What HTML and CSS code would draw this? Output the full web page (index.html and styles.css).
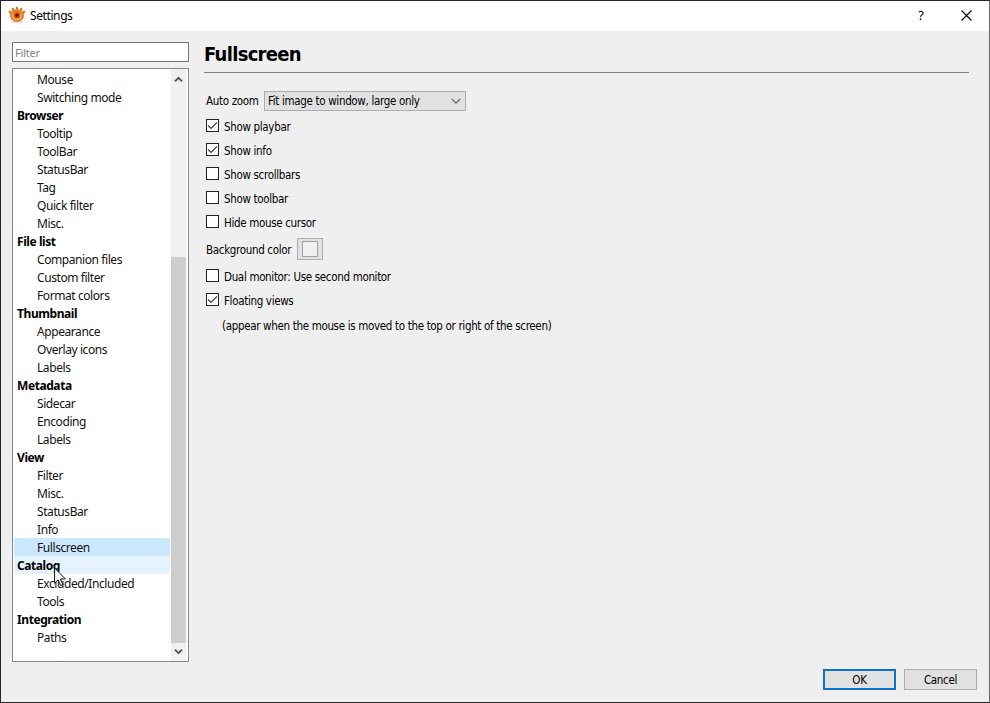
FILE: index.html
```html
<!DOCTYPE html>
<html lang="en">
<head>
<meta charset="utf-8">
<title>Settings</title>
<link rel="stylesheet" href="styles.css">
</head>
<body>
<div class="window">
  <header class="titlebar">
    <svg class="logo" width="18" height="18" viewBox="0 0 18 18">
      <ellipse cx="9" cy="15.6" rx="6" ry="1.2" fill="#d9d0cc"/>
      <g stroke="#d97920" stroke-width="2.5" stroke-linecap="round"><path d="M3.5 7.5 2 5.8M5.7 5 4.8 3M9 4V2.3M12.3 5l1-2M14.5 7.5l1.5-1.7"/></g>
      <ellipse cx="9" cy="9.8" rx="7" ry="6" fill="#e57c1b"/>
      <ellipse cx="9" cy="9.8" rx="5" ry="4" fill="#f9c078"/>
      <circle cx="9" cy="9.2" r="3.5" fill="#d9561a"/>
      <circle cx="9" cy="9.2" r="1.8" fill="#7d1205"/>
    </svg>
    <span class="caption">Settings</span>
    <span class="help">?</span>
    <svg class="close" width="11" height="11" viewBox="0 0 11 11"><path d="M.5.5l10 10M10.5.5l-10 10" stroke="#000" stroke-width="1.1"/></svg>
  </header>
  <main class="content">
    <aside class="sidebar">
      <div class="filter">Filter</div>
      <div class="list">
        <ul class="tree">
          <li>Mouse</li><li>Switching mode</li>
          <li class="group">Browser</li>
          <li>Tooltip</li><li>ToolBar</li><li>StatusBar</li><li>Tag</li><li>Quick filter</li><li>Misc.</li>
          <li class="group">File list</li>
          <li>Companion files</li><li>Custom filter</li><li>Format colors</li>
          <li class="group">Thumbnail</li>
          <li>Appearance</li><li>Overlay icons</li><li>Labels</li>
          <li class="group">Metadata</li>
          <li>Sidecar</li><li>Encoding</li><li>Labels</li>
          <li class="group">View</li>
          <li>Filter</li><li>Misc.</li><li>StatusBar</li><li>Info</li><li class="selected">Fullscreen</li>
          <li class="group hover">Catalog</li>
          <li>Excluded/Included</li><li>Tools</li>
          <li class="group">Integration</li>
          <li>Paths</li>
        </ul>
        <div class="scrollbar">
          <svg class="arrow" width="9" height="7" viewBox="0 0 9 7"><path d="M1 5.3 4.5 1.8 8 5.3" fill="none" stroke="#555" stroke-width="1.9"/></svg>
          <div class="thumb"></div>
          <svg class="arrow" width="9" height="7" viewBox="0 0 9 7"><path d="M1 1.7 4.5 5.2 8 1.7" fill="none" stroke="#555" stroke-width="1.9"/></svg>
        </div>
      </div>
    </aside>
    <section class="page">
      <h1><span>Fullscreen</span></h1>
      <div class="row zoom"><span class="zoom-label">Auto zoom</span>
        <div class="select"><span>Fit image to window, large only</span><svg width="10" height="6" viewBox="0 0 10 6"><path d="M.7.8 5 5.1 9.3.8" fill="none" stroke="#555" stroke-width="1.1"/></svg></div>
      </div>
      <div class="row"><i class="box"><svg width="11" height="11" viewBox="0 0 11 11"><path d="M1 5.3 4 8.3 10 2.3" fill="none" stroke="#333" stroke-width="1.2"/></svg></i><span>Show playbar</span></div>
      <div class="row"><i class="box"><svg width="11" height="11" viewBox="0 0 11 11"><path d="M1 5.3 4 8.3 10 2.3" fill="none" stroke="#333" stroke-width="1.2"/></svg></i><span>Show info</span></div>
      <div class="row"><i class="box"></i><span>Show scrollbars</span></div>
      <div class="row"><i class="box"></i><span>Show toolbar</span></div>
      <div class="row"><i class="box"></i><span>Hide mouse cursor</span></div>
      <div class="row color"><span class="color-label">Background color</span><div class="swatch"><i></i></div></div>
      <div class="row"><i class="box"></i><span>Dual monitor: Use second monitor</span></div>
      <div class="row"><i class="box"><svg width="11" height="11" viewBox="0 0 11 11"><path d="M1 5.3 4 8.3 10 2.3" fill="none" stroke="#333" stroke-width="1.2"/></svg></i><span>Floating views</span></div>
      <div class="row note"><span>(appear when the mouse is moved to the top or right of the screen)</span></div>
      <footer class="buttons"><div class="button primary">OK</div><div class="button">Cancel</div></footer>
    </section>
  </main>
  <svg class="cursor" width="13" height="20" viewBox="0 0 13 20"><path d="M.6 1v15.2l3.5-3.4 2.5 5.7 2.3-1-2.5-5.5h5z" fill="#fff" stroke="#111" stroke-width="1"/></svg>
</div>
</body>
</html>
```

FILE: styles.css
```css
* { box-sizing: border-box; }
body { margin: 0; overflow: hidden; }
.window {
  position: relative;
  display: flex;
  flex-direction: column;
  width: 990px;
  height: 703px;
  border: 1px solid #29262a;
  border-right-color: #6a686b;
  background: #efefef;
  color: #000;
  font: 12px/18px "Noto Sans", sans-serif;
}
.titlebar {
  display: flex;
  align-items: center;
  height: 30px;
  padding: 0 17px 2px 7px;
  background: #fff;
}
.caption { flex: 1; margin: 1px 0 0 4px; letter-spacing: -0.4px; }
.help { margin-right: 37px; font-size: 13px; }
.content { display: flex; flex: 1; min-height: 0; }
.sidebar {
  display: flex;
  flex-direction: column;
  gap: 6px;
  width: 188px;
  padding: 11px 0 40px 11px;
}
.filter {
  height: 20px;
  padding-left: 2px;
  border: 1px solid #77787d;
  background: #fff;
  color: #818181;
  font-size: 11px;
  line-height: 20px;
  letter-spacing: -0.2px;
}
.list {
  display: flex;
  flex: 1;
  min-height: 0;
  padding: 0 2px 0 1px;
  border: 1px solid #828790;
  background: #fff;
}
.tree { flex: 1; margin: 0 1px 0 0; padding: 1px 0 0; list-style: none; white-space: nowrap; }
.tree li { height: 18px; padding-left: 23px; line-height: 19px; letter-spacing: -0.42px; color: #111; }
.tree .group { padding-left: 3px; font-weight: bold; letter-spacing: -0.42px; color: #000; }
.tree .selected { background: #cce8ff; }
.tree .hover { background: #e5f3ff; }
.scrollbar {
  display: flex;
  flex-direction: column;
  align-items: center;
  width: 15px;
  padding: 7px 0 6px;
  background: #f0f0f0;
}
.thumb { width: 15px; height: 386px; margin: auto 0 5px; background: #cdcdcd; }
.arrow { flex: none; }
.page {
  display: flex;
  flex: 1;
  flex-direction: column;
  padding: 0 12px 12px 15px;
  font: 11.5px/24px "DejaVu Sans Condensed", "DejaVu Sans", sans-serif;
  letter-spacing: -0.33px;
}
h1 {
  height: 42px;
  margin: 0 8px 17px 0;
  border-bottom: 1px solid #808080;
  font: bold 20px/46px "DejaVu Sans Condensed", "DejaVu Sans", sans-serif;
  letter-spacing: -0.7px;
}
.row { display: flex; align-items: center; height: 24px; padding-left: 2px; white-space: nowrap; }
.row.zoom { height: 22px; margin-bottom: 2px; }
.zoom-label { width: 58px; }
.select {
  display: flex;
  align-items: center;
  justify-content: space-between;
  width: 202px;
  height: 20px;
  padding: 0 4px 0 3px;
  border: 1px solid #adadad;
  background: #e1e1e1;
}
.box { width: 13px; height: 13px; margin: 0 5px 1px 0; border: 1px solid #222; background: #fff; }
.box + span { margin-top: 1px; }
.box svg { display: block; }
.row.color { height: 30px; }
.color-label { width: 91px; margin-top: 2px; }
.swatch { display: flex; align-items: center; justify-content: center; width: 26px; height: 22px; border: 1px solid #adadad; background: #e1e1e1; }
.swatch i { width: 16px; height: 16px; border: 1px solid #a0a0a0; background: #f0f0f0; }
.note { padding: 2px 0 0 18px; height: 26px; }
.buttons { display: flex; justify-content: flex-end; gap: 8px; margin-top: auto; }
.button { width: 73px; height: 21px; border: 1px solid #adadad; background: #e1e1e1; line-height: 20px; text-align: center; }
.primary { border: 2px solid #0c73c6; line-height: 18px; }
.cursor { position: absolute; left: 53px; top: 566px; }
```
